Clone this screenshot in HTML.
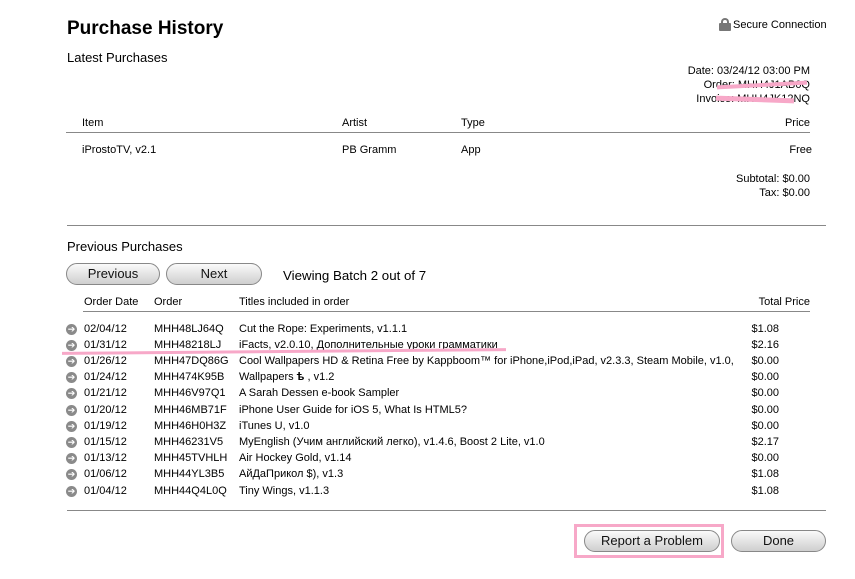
<!DOCTYPE html>
<html><head><meta charset="utf-8"><style>
body{margin:0;width:855px;height:579px;background:#fff;position:relative;font-family:"Liberation Sans","Noto Sans CJK SC",sans-serif;color:#000;overflow:hidden}
.a{position:absolute;white-space:nowrap;font-size:11px;line-height:13px}
.r{text-align:right}
.hr{position:absolute;height:1px;background:#888}
.btn{position:absolute;height:20px;border:1px solid #888;border-radius:11px;background:linear-gradient(#fafafa,#e4e4e4 50%,#cfcfcf);font-size:13px;line-height:20px;text-align:center;color:#111}
.ic{position:absolute;width:11px;height:11px;border-radius:50%;background:#8a8a8a;color:#fff;font-size:9px;line-height:11px;text-align:center}
.pk{position:absolute;background:#f7a8c8}
</style></head><body>
<div class="a" style="left:67px;top:18px;font-size:19px;line-height:22px;font-weight:bold">Purchase History</div>
<div class="a" style="left:67px;top:50px;font-size:13px;line-height:15px">Latest Purchases</div>
<div style="position:absolute;left:721px;top:18px;width:8px;height:8px;border:2px solid #777;border-bottom:none;border-radius:4px 4px 0 0;box-sizing:border-box"></div>
<div style="position:absolute;left:719px;top:23px;width:12px;height:8px;background:#777;border-radius:1px"></div>
<div class="a" style="left:733px;top:19px">Secure Connection</div>
<div class="a r" style="right:45px;top:65px">Date: 03/24/12 03:00 PM</div>
<div class="a r" style="right:45px;top:79px">Order: MHH4J1AB0Q</div>
<div class="a r" style="right:45px;top:93px">Invoice: MHH4JK12NQ</div>
<div class="pk" style="left:717px;top:83px;width:90px;height:4px;transform:rotate(-3deg)"></div>
<div class="pk" style="left:716px;top:97px;width:78px;height:5px;transform:rotate(2deg)"></div>
<div class="a" style="left:82px;top:117px">Item</div>
<div class="a" style="left:342px;top:117px">Artist</div>
<div class="a" style="left:461px;top:117px">Type</div>
<div class="a r" style="right:45px;top:117px">Price</div>
<div class="hr" style="left:66px;width:744px;top:132px"></div>
<div class="a" style="left:82px;top:144px">iProstoTV, v2.1</div>
<div class="a" style="left:342px;top:144px">PB Gramm</div>
<div class="a" style="left:461px;top:144px">App</div>
<div class="a r" style="right:43px;top:144px">Free</div>
<div class="a r" style="right:45px;top:173px">Subtotal: $0.00</div>
<div class="a r" style="right:45px;top:187px">Tax: $0.00</div>
<div class="hr" style="left:67px;width:759px;top:225px"></div>
<div class="a" style="left:67px;top:239px;font-size:13px;line-height:15px">Previous Purchases</div>
<div class="btn" style="left:66px;top:263px;width:92px">Previous</div>
<div class="btn" style="left:166px;top:263px;width:94px">Next</div>
<div class="a" style="left:283px;top:268px;font-size:13.3px;line-height:15px">Viewing Batch 2 out of 7</div>
<div class="a" style="left:84px;top:296px">Order Date</div>
<div class="a" style="left:154px;top:296px">Order</div>
<div class="a" style="left:239px;top:296px">Titles included in order</div>
<div class="a r" style="right:45px;top:296px">Total Price</div>
<div class="hr" style="left:83px;width:727px;top:311px"></div>
<div id="rows"></div>
<div class="pk" style="left:62px;top:350px;width:444px;height:3px;transform:rotate(-0.5deg)"></div>
<div class="hr" style="left:67px;width:759px;top:510px"></div>
<div style="position:absolute;left:574px;top:524px;width:150px;height:34px;border:3px solid #f7a8c8;box-sizing:border-box"></div>
<div class="btn" style="left:584px;top:530px;width:134px">Report a Problem</div>
<div class="btn" style="left:731px;top:530px;width:93px">Done</div>
<script>
var d=[["02/04/12","MHH48LJ64Q","Cut the Rope: Experiments, v1.1.1","$1.08"],
["01/31/12","MHH48218LJ","iFacts, v2.0.10, Дополнительные уроки грамматики","$2.16"],
["01/26/12","MHH47DQ86G","Cool Wallpapers HD & Retina Free by Kappboom™ for iPhone,iPod,iPad, v2.3.3, Steam Mobile, v1.0, Li...","$0.00"],
["01/24/12","MHH474K95B","Wallpapers <b>ѣ</b> , v1.2","$0.00"],
["01/21/12","MHH46V97Q1","A Sarah Dessen e-book Sampler","$0.00"],
["01/20/12","MHH46MB71F","iPhone User Guide for iOS 5, What Is HTML5?","$0.00"],
["01/19/12","MHH46H0H3Z","iTunes U, v1.0","$0.00"],
["01/15/12","MHH46231V5","MyEnglish (Учим английский легко), v1.4.6, Boost 2 Lite, v1.0","$2.17"],
["01/13/12","MHH45TVHLH","Air Hockey Gold, v1.14","$0.00"],
["01/06/12","MHH44YL3B5","АйДаПрикол $), v1.3","$1.08"],
["01/04/12","MHH44Q4L0Q","Tiny Wings, v1.1.3","$1.08"]];
var h="";d.forEach(function(r,i){var t=322.5+i*16.2;
h+='<div class="ic" style="left:66px;top:'+(t+1)+'px">➔</div><div class="a" style="left:84px;top:'+t+'px">'+r[0]+'</div><div class="a" style="left:154px;top:'+t+'px">'+r[1]+'</div><div class="a" style="left:239px;top:'+t+'px;width:498px;overflow:hidden">'+r[2]+'</div><div class="a r" style="right:76px;top:'+t+'px">'+r[3]+'</div>';});
document.getElementById("rows").innerHTML=h;
</script>
</body></html>
